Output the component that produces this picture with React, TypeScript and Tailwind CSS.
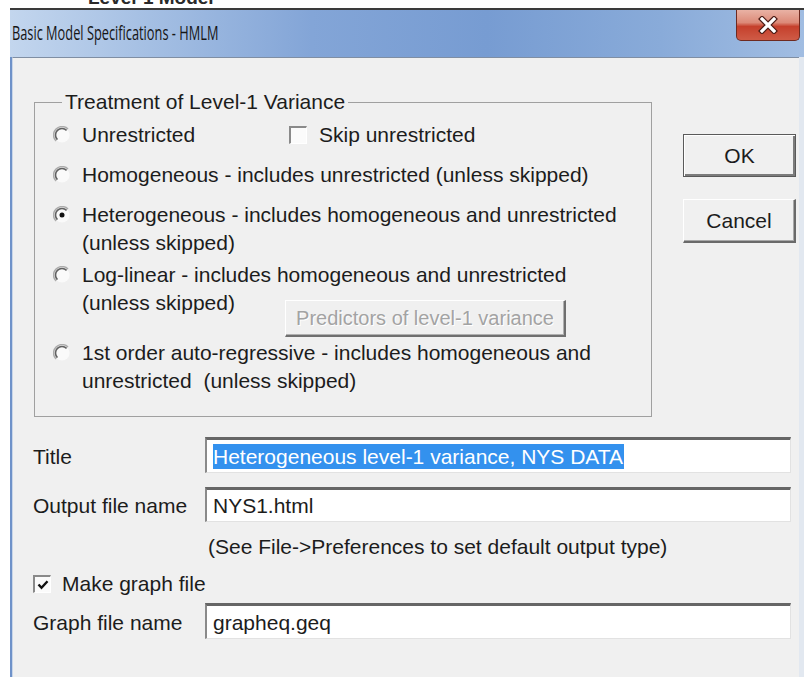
import React from "react";

const BODY_FONT = { fontFamily: '"Liberation Sans", Arial, sans-serif' };
const TITLE_FONT = { fontFamily: '"Open Sans", "Noto Sans", sans-serif' };

function Radio({ checked = false }: { checked?: boolean }) {
  return (
    <svg width="18" height="18" viewBox="0 0 18 18" className="shrink-0">
      <circle cx="9" cy="9" r="7.6" fill="#fafafa" />
      <path d="M15.01 2.99 A8.5 8.5 0 0 0 2.99 15.01" fill="none" stroke="#ababab" strokeWidth="1.5" />
      <path d="M13.6 4.4 A6.5 6.5 0 0 0 4.4 13.6" fill="none" stroke="#616161" strokeWidth="1.6" />
      {checked && <circle cx="9" cy="9" r="2.5" fill="#111" />}
    </svg>
  );
}

function CheckBox({ checked = false }: { checked?: boolean }) {
  return (
    <span className="w-[18px] h-[18px] shrink-0 flex items-center justify-center bg-[#fbfbfb] border-t-2 border-l-2 border-t-[#8a8a8a] border-l-[#8a8a8a] border-b border-r border-b-[#ffffff] border-r-[#ffffff]">
      {checked && (
        <svg width="12" height="12" viewBox="0 0 12 12">
          <path d="M1.5 5.5 L4.5 8.8 L10.5 2.2" fill="none" stroke="#111" strokeWidth="2.4" />
        </svg>
      )}
    </span>
  );
}

function CloseGlyph() {
  return (
    <svg width="22" height="18" viewBox="0 0 22 18">
      <path d="M5 3 L17 15 M17 3 L5 15" stroke="#4a1a14" strokeWidth="5.6" strokeLinecap="square" />
      <path d="M5 3 L17 15 M17 3 L5 15" stroke="#ffffff" strokeWidth="3.2" strokeLinecap="square" />
    </svg>
  );
}

function TextField({ children }: { children: React.ReactNode }) {
  return (
    <div className="w-[586px] h-full flex items-center pl-[6px] bg-white border-t-[3px] border-l-2 border-t-[#666666] border-l-[#8a8a8a] border-r border-b border-r-[#e2e2e2] border-b-[#e2e2e2]">
      {children}
    </div>
  );
}

export default function App() {
  return (
    <div className="w-[804px] h-[677px] overflow-hidden bg-white flex flex-col text-[21px] text-[#1c1c1c]" style={BODY_FONT}>
      {/* edge of the window behind */}
      <div className="h-[8px] overflow-hidden pl-[88px]">
        <div className="-mt-[13px] text-[19px] font-bold leading-[22px] text-[#2a2a2a]">Level-1 Model</div>
      </div>

      <div className="flex-1 min-h-0 ml-[10px] border-t-2 border-[#3a3a3a] flex flex-col">
        {/* caption bar */}
        <div className="h-[47px] flex items-start justify-between bg-[linear-gradient(to_right,#c3d6ee_0%,#a7c1e4_16%,#83a5d7_38%,#779cd2_60%,#89abd9_82%,#a1bde2_100%)]">
          <div className="pt-[11px] pl-[3px] text-[20px] leading-[24px] text-[#161616] origin-left scale-x-64 whitespace-nowrap" style={TITLE_FONT}>
            Basic Model Specifications - HMLM
          </div>
          <div className="mr-[4px] w-[64px] h-[31px] rounded-b-[5px] border border-t-0 border-[#6e2a20] flex items-center justify-center bg-[linear-gradient(to_bottom,#e9b2a4_0%,#dc8a78_42%,#c5402c_55%,#cf5b46_100%)]">
            <CloseGlyph />
          </div>
        </div>

        <div className="flex-1 min-h-0 flex">
          <div className="w-[2px] bg-[#6f92c9]" />
          <div className="flex-1 bg-[#f0f0f0] border-t border-l border-t-[#7f8ea3] border-l-[#c9d6e8]">
            <div className="flex items-start">
              <fieldset className="ml-[21px] mt-[33px] w-[618px] border border-[#a0a0a0] pl-[18px] pt-[8px] pb-[21px]">
                <legend className="ml-[9px] px-[3px] leading-[22px]">Treatment of Level-1 Variance</legend>

                <div className="flex items-center h-[28px]">
                  <div className="w-[236px] flex items-center">
                    <Radio />
                    <span className="ml-[11px] leading-[28px]">Unrestricted</span>
                  </div>
                  <CheckBox />
                  <span className="ml-[12px] leading-[28px]">Skip unrestricted</span>
                </div>

                <div className="mt-[12px] flex items-center h-[28px]">
                  <Radio />
                  <span className="ml-[11px] leading-[28px]">Homogeneous - includes unrestricted (unless skipped)</span>
                </div>

                <div className="mt-[12px] flex items-start">
                  <div className="mt-[5px]"><Radio checked /></div>
                  <div className="ml-[11px] leading-[28px]">
                    <div>Heterogeneous - includes homogeneous and unrestricted</div>
                    <div>(unless skipped)</div>
                  </div>
                </div>

                <div className="mt-[4px] flex items-start">
                  <div className="mt-[5px]"><Radio /></div>
                  <div className="ml-[11px] leading-[28px]">
                    <div>Log-linear - includes homogeneous and unrestricted</div>
                    <div className="flex items-start">
                      <span className="w-[203px]">(unless skipped)</span>
                      <div className="mt-[11px] w-[281px] h-[37px] flex items-center justify-center text-[20px] text-[#a3a3a3] [text-shadow:1px_1px_0_#ffffff] border-t border-l border-[#ffffff] border-r-2 border-b-2 border-r-[#6f6f6f] border-b-[#6f6f6f] shadow-[inset_-1px_-1px_0_#b0b0b0]">
                        Predictors of level-1 variance
                      </div>
                    </div>
                  </div>
                </div>

                <div className="mt-[2px] flex items-start">
                  <div className="mt-[5px]"><Radio /></div>
                  <div className="ml-[11px] leading-[28px]">
                    <div>1st order auto-regressive - includes homogeneous and</div>
                    <div>unrestricted&nbsp; (unless skipped)</div>
                  </div>
                </div>
              </fieldset>

              <div className="ml-[31px] mt-[76px] flex flex-col gap-[22px]">
                <div className="w-[113px] h-[43px] flex items-center justify-center border border-[#5a5a5a] shadow-[inset_1px_1px_0_#ffffff,inset_-2px_-2px_0_#7c7c7c]">
                  OK
                </div>
                <div className="w-[113px] h-[44px] flex items-center justify-center border-t border-l border-[#ffffff] border-r-2 border-b-2 border-r-[#6a6a6a] border-b-[#6a6a6a] shadow-[inset_-1px_-1px_0_#a8a8a8]">
                  Cancel
                </div>
              </div>
            </div>

            <div className="ml-[20px] mt-[20px] w-[758px] flex flex-col">
              <div className="h-[36px] flex items-center">
                <span className="w-[172px] pt-[3px]">Title</span>
                <TextField>
                  <span className="bg-[#3391ee] text-white leading-[25px] pr-[1px]">Heterogeneous level-1 variance, NYS DATA</span>
                </TextField>
              </div>

              <div className="mt-[14px] h-[35px] flex items-center">
                <span className="w-[172px] pt-[3px]">Output file name</span>
                <TextField>
                  <span className="leading-[25px]">NYS1.html</span>
                </TextField>
              </div>

              <div className="mt-[11px] leading-[28px] pl-[175px]">(See File-&gt;Preferences to set default output type)</div>

              <div className="mt-[9px] h-[28px] flex items-center">
                <CheckBox checked />
                <span className="ml-[11px]">Make graph file</span>
              </div>

              <div className="mt-[5px] h-[36px] flex items-center">
                <span className="w-[172px] pt-[3px]">Graph file name</span>
                <TextField>
                  <span className="leading-[25px]">grapheq.geq</span>
                </TextField>
              </div>
            </div>
          </div>
          <div className="w-[5px] bg-[#e2e8f0]" />
        </div>
      </div>
    </div>
  );
}
